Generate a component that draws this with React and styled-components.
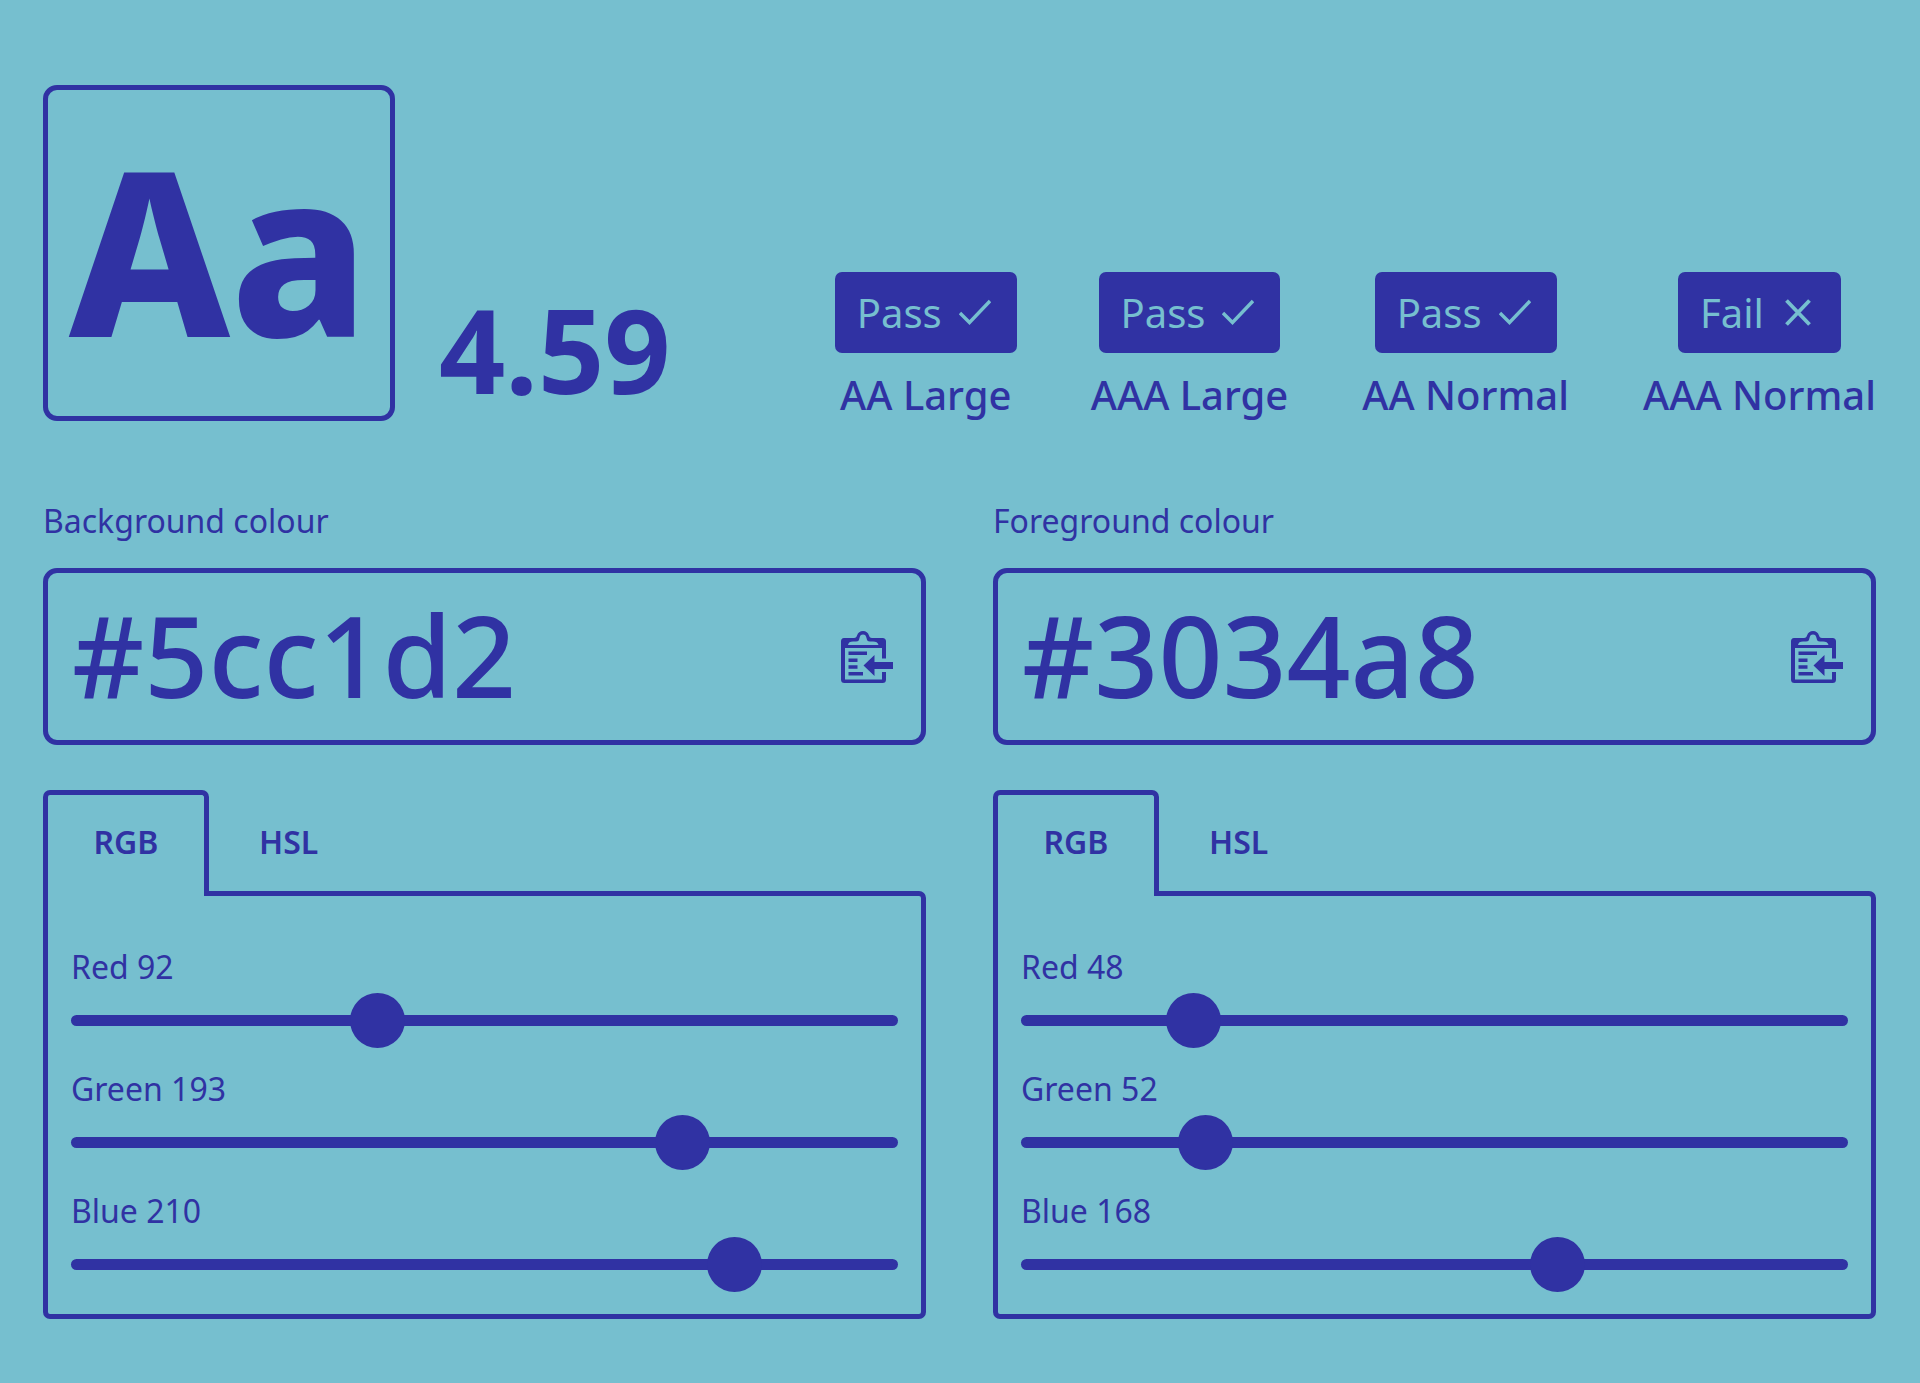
import React, { useId, useState } from "react";
import styled, { createGlobalStyle } from "styled-components";

const INK = "#3032a3";
const PAPER = "#76bfcf";

const GlobalStyle = createGlobalStyle`
  *, *::before, *::after { box-sizing: border-box; }
  body {
    margin: 0;
    background: ${PAPER};
    color: ${INK};
    font-family: "Noto Sans", "Open Sans", sans-serif;
    font-size: 32px;
    line-height: 40px;
  }
  button, input { font: inherit; color: inherit; }
`;

const Page = styled.main`
  padding: 85px 44px 64px 43px;
`;

const Summary = styled.header`
  display: flex;
  align-items: flex-end;
`;

const Preview = styled.div`
  display: flex;
  align-items: center;
  justify-content: center;
  width: 352px;
  height: 336px;
  padding-bottom: 8px;
  border: 5px solid ${INK};
  border-radius: 14px;
  font-size: 228px;
  font-weight: 800;
  line-height: 1;
`;

const Ratio = styled.output`
  margin-left: 44px;
  padding-bottom: 4px;
  font-size: 116px;
  font-weight: 700;
  line-height: 136px;
`;

const Results = styled.ul`
  display: flex;
  gap: 74px;
  margin: 0 0 0 auto;
  padding: 0 0 2px;
  list-style: none;
  font-size: 40px;
  font-weight: 500;
  line-height: 48px;
`;

const Result = styled.li`
  display: flex;
  flex-direction: column;
  align-items: center;
  gap: 18px;
`;

const Badge = styled.span`
  display: flex;
  align-items: center;
  gap: 17px;
  height: 81px;
  padding: 0 26px 0 22px;
  border-radius: 7px;
  background: ${INK};
  color: ${PAPER};
  font-weight: 400;
`;

const Columns = styled.div`
  display: grid;
  grid-template-columns: repeat(2, minmax(0, 1fr));
  gap: 67px;
  margin-top: 80px;
`;

const FieldLabel = styled.label`
  display: block;
  margin-bottom: 27px;
`;

const HexField = styled.div`
  display: flex;
  align-items: center;
  height: 177px;
  padding: 0 24px;
  border: 5px solid ${INK};
  border-radius: 14px;
`;

const HexInput = styled.input`
  flex: 1;
  min-width: 0;
  height: 144px;
  padding: 0 0 4px;
  border: 0;
  outline: 0;
  background: none;
  font-size: 112px;
  font-weight: 500;
`;

const PasteButton = styled.button`
  display: flex;
  padding: 4px;
  border: 0;
  background: none;
  cursor: pointer;
`;

const TabList = styled.div`
  display: flex;
  margin-top: 45px;
`;

const Tab = styled.button`
  height: 106px;
  min-width: ${(p) => (p.$active ? "166px" : "0")};
  margin-bottom: -5px;
  padding: 0 45px 7px;
  border: 5px solid ${(p) => (p.$active ? INK : "transparent")};
  border-bottom: 0;
  border-radius: 7px 7px 0 0;
  background: ${(p) => (p.$active ? PAPER : "none")};
  font-weight: 600;
  position: relative;
  cursor: pointer;
`;

const Panel = styled.div`
  display: grid;
  gap: 21px;
  padding: 51px 23px 22px;
  border: 5px solid ${INK};
  border-radius: ${(p) => (p.$first ? "0 7px 7px 7px" : "7px")};
`;

const Channel = styled.div`
  display: flex;
  flex-direction: column;
  gap: 5px;
`;

const Slider = styled.input`
  appearance: none;
  width: 100%;
  height: 56px;
  margin: 0;
  background: none;
  cursor: pointer;

  &::-webkit-slider-runnable-track {
    height: 11px;
    border-radius: 6px;
    background: ${INK};
  }
  &::-webkit-slider-thumb {
    appearance: none;
    width: 55px;
    height: 55px;
    margin-top: -22px;
    border-radius: 50%;
    background: ${INK};
  }
  &::-moz-range-track {
    height: 11px;
    border-radius: 6px;
    background: ${INK};
  }
  &::-moz-range-thumb {
    width: 55px;
    height: 55px;
    border: 0;
    border-radius: 50%;
    background: ${INK};
  }
`;

const CheckIcon = () => (
  <svg width="32" height="30" viewBox="0 0 32 30" fill="none" stroke="currentColor" strokeWidth="3.4" aria-hidden="true">
    <path d="M1 15 L10.5 24.5 L31 3" />
  </svg>
);

const CrossIcon = () => (
  <svg width="34" height="30" viewBox="0 0 34 30" fill="none" stroke="currentColor" strokeWidth="3.8" aria-hidden="true">
    <path d="M5.5 2.500 L28.500 26.500 M28.500 2.500 L5.500 26.500" />
  </svg>
);

const PasteIcon = () => (
  <svg width="52" height="52" viewBox="0 0 52 52" fill="currentColor" aria-hidden="true">
    <path
      fillRule="evenodd"
      d="M3 7 H13 C15 7 15.5 6 16 4.500 C17 1.500 19 0 22 0 C25 0 27 1.500 28 4.500 C28.500 6 29 7 31 7 H41.500 Q45 7 45 10.500 V27.500 H41 V17 H4 V48.500 H41 V41 H45 V48.500 Q45 52 41.500 52 H3.500 Q0 52 0 48.500 V10.500 Q0 7 3 7 Z M7 14 H37.500 C37 11.500 35 10.500 32 10.500 H29 C26.500 10.500 26 9.500 25.500 7 C25 4.500 24 3.500 22 3.500 C20 3.500 19 4.500 18.500 7 C18 9.500 17.500 10.500 15 10.500 H12 C9 10.500 7.500 11.500 7 14 Z"
    />
    <path d="M7.500 20.500 H26 V24 H7.500 Z M7.500 27.500 H16.500 V31 H7.500 Z M7.500 34.200 H16.500 V37.700 H7.500 Z M7.500 41 H22 V44.500 H7.500 Z" />
    <path d="M22.500 34.500 L33.500 24 V31 H52 V38 H33.500 V45 Z" />
  </svg>
);

const results = [
  { label: "AA Large", pass: true },
  { label: "AAA Large", pass: true },
  { label: "AA Normal", pass: true },
  { label: "AAA Normal", pass: false },
];

const channelNames = ["Red", "Green", "Blue"];

const toHex = (rgb) => "#" + rgb.map((n) => n.toString(16).padStart(2, "0")).join("");

function ColourPicker({ title, initial }) {
  const id = useId();
  const [rgb, setRgb] = useState(initial);
  const [hex, setHex] = useState(toHex(initial));
  const [mode, setMode] = useState("RGB");

  const changeHex = (text) => {
    setHex(text);
    if (/^#[0-9a-f]{6}$/i.test(text)) {
      setRgb([1, 3, 5].map((i) => parseInt(text.slice(i, i + 2), 16)));
    }
  };

  const changeChannel = (index, value) => {
    const next = rgb.map((n, i) => (i === index ? value : n));
    setRgb(next);
    setHex(toHex(next));
  };

  const paste = async () => changeHex(await navigator.clipboard.readText());

  return (
    <section>
      <FieldLabel htmlFor={`${id}-hex`}>{title}</FieldLabel>
      <HexField>
        <HexInput
          id={`${id}-hex`}
          value={hex}
          spellCheck={false}
          onChange={(e) => changeHex(e.target.value)}
        />
        <PasteButton type="button" aria-label="Paste colour" onClick={paste}>
          <PasteIcon />
        </PasteButton>
      </HexField>
      <TabList role="tablist">
        {["RGB", "HSL"].map((name) => (
          <Tab
            key={name}
            type="button"
            role="tab"
            aria-selected={mode === name}
            $active={mode === name}
            onClick={() => setMode(name)}
          >
            {name}
          </Tab>
        ))}
      </TabList>
      <Panel role="tabpanel" $first={mode === "RGB"}>
        {channelNames.map((name, i) => (
          <Channel key={name}>
            <label htmlFor={`${id}-${name}`}>
              {name} {rgb[i]}
            </label>
            <Slider
              id={`${id}-${name}`}
              type="range"
              min="0"
              max="255"
              value={rgb[i]}
              onChange={(e) => changeChannel(i, Number(e.target.value))}
            />
          </Channel>
        ))}
      </Panel>
    </section>
  );
}

export default function App() {
  return (
    <>
      <GlobalStyle />
      <Page>
        <Summary>
          <Preview>Aa</Preview>
          <Ratio>4.59</Ratio>
          <Results>
            {results.map(({ label, pass }) => (
              <Result key={label}>
                <Badge>
                  {pass ? "Pass" : "Fail"}
                  {pass ? <CheckIcon /> : <CrossIcon />}
                </Badge>
                {label}
              </Result>
            ))}
          </Results>
        </Summary>
        <Columns>
          <ColourPicker title="Background colour" initial={[92, 193, 210]} />
          <ColourPicker title="Foreground colour" initial={[48, 52, 168]} />
        </Columns>
      </Page>
    </>
  );
}
